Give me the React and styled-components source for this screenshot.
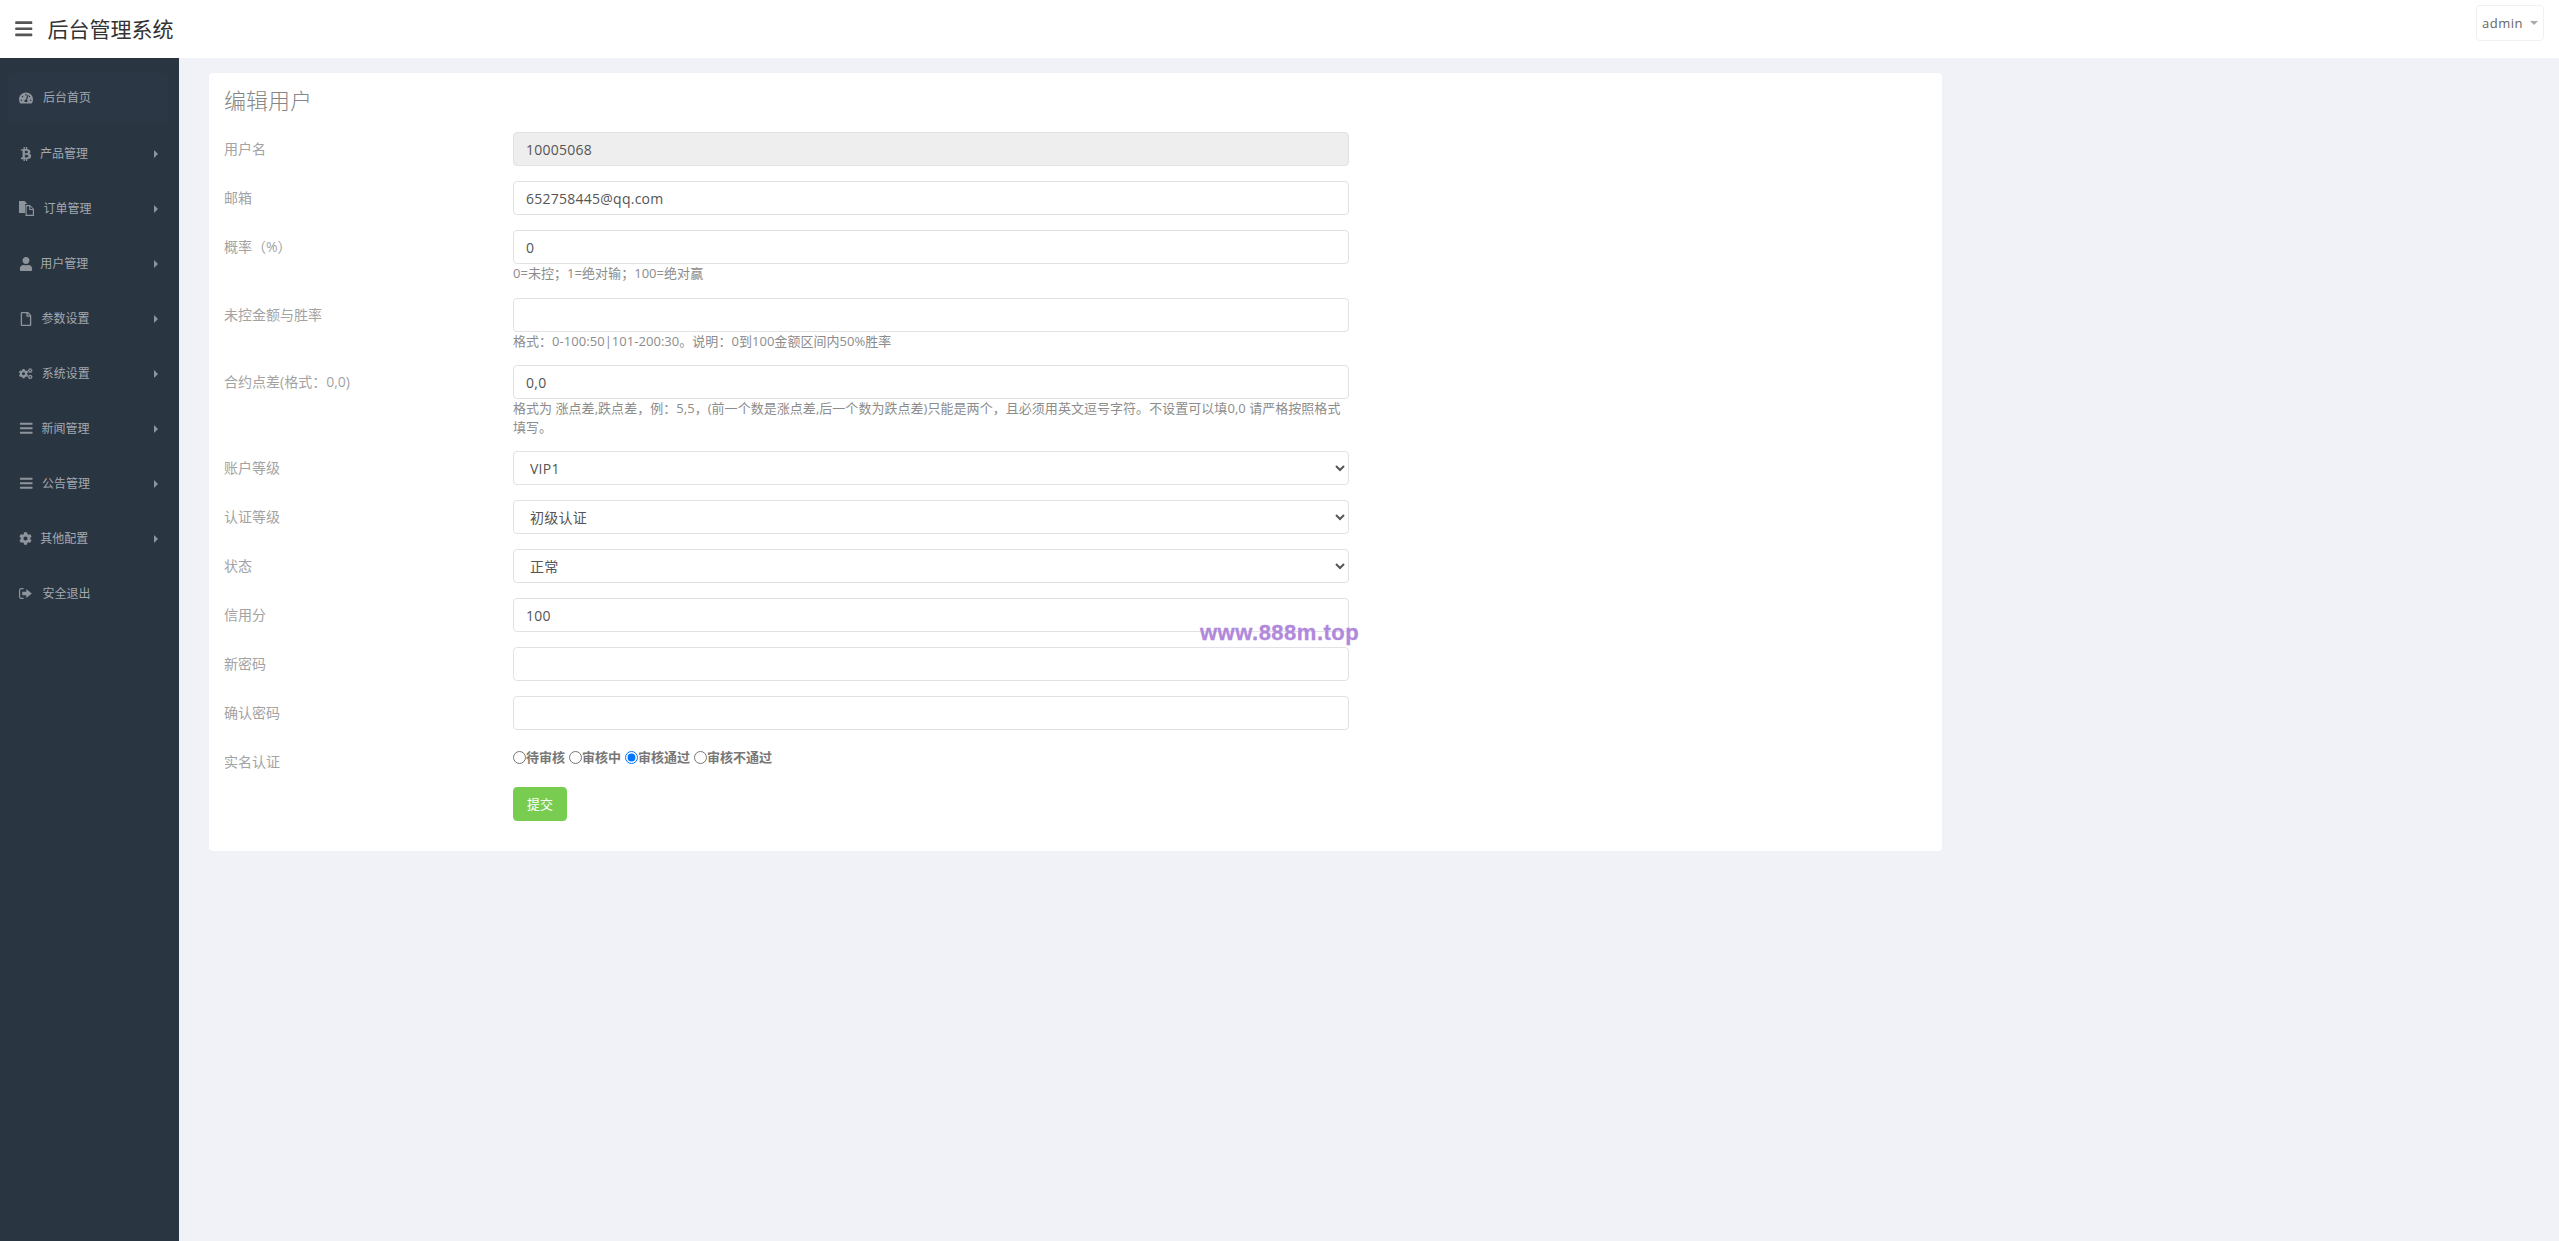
import React from 'react'
import styled, { createGlobalStyle } from 'styled-components'
import { FaBars, FaBtc, FaCog, FaCogs, FaRegFile, FaTachometerAlt, FaUser } from 'react-icons/fa'

const Global = createGlobalStyle`
  html, body { margin: 0; padding: 0; height: 100%; background: #f0f2f7; }
  body { font-family: "Open Sans", "Noto Sans CJK SC", sans-serif; font-size: 14px; line-height: 1.42857; color: #797979; overflow: hidden; }
  * { box-sizing: border-box; }
`

const Page = styled.div`
  height: 1241px;
  display: flex;
  flex-direction: column;
  position: relative;
`

const Header = styled.header`
  height: 58px;
  flex: none;
  background: #fff;
  display: flex;
  align-items: center;
  padding: 0 15px 0 14px;
`

const Burger = styled.span`
  display: flex;
  font-size: 19.5px;
  color: #555;
  margin-right: 14px;
  svg { width: auto; height: 1em; }
`

const Brand = styled.div`
  font-size: 21px;
  color: #333;
  line-height: 1;
  flex: 1;
`

const UserButton = styled.div`
  width: 68px;
  height: 36px;
  margin-top: -12px;
  border: 1px solid #f0f0f2;
  border-radius: 4px;
  display: flex;
  align-items: center;
  justify-content: center;
  gap: 7px;
  font-size: 13px;
  letter-spacing: 0.5px;
  color: #666;
`

const Caret = styled.i`
  width: 0;
  height: 0;
  border-left: 4px solid transparent;
  border-right: 4px solid transparent;
  border-top: 4px solid #aaa;
`

const Body = styled.div`
  flex: 1;
  display: flex;
  min-height: 0;
`

const Sidebar = styled.nav`
  width: 179px;
  flex: none;
  background: #2a3542;
  padding: 15px 11px 0 8px;
`

const MenuItem = styled.a`
  height: ${p => (p.$active ? '50px' : '55px')};
  margin-bottom: ${p => (p.$active ? '3px' : '0')};
  display: flex;
  align-items: center;
  padding: 0 10px 0 11px;
  font-size: 12px;
  color: #a4a9af;
  border-radius: 4px;
  background: ${p => (p.$active ? '#2c3745' : 'transparent')};
`

const MenuIcon = styled.span`
  display: flex;
  align-items: center;
  font-size: ${p => p.$size}px;
  color: #8e949b;
  margin-right: ${p => p.$gap}px;
  svg { width: auto; height: 1em; }
`

const MenuText = styled.span`
  flex: 1;
`

const Arrow = styled.i`
  width: 0;
  height: 0;
  border-top: 4px solid transparent;
  border-bottom: 4px solid transparent;
  border-left: 4px solid #8e949b;
`

const Main = styled.main`
  flex: 1;
  padding: 15px 29px 15px 30px;
`

const Card = styled.section`
  width: 1733px;
  height: 778px;
  background: #fff;
  border-radius: 4px;
  padding: 0 15px;
`

const Title = styled.h1`
  margin: 0;
  height: 59px;
  padding-top: 12px;
  font-size: 22px;
  line-height: 30px;
  font-weight: 300;
  color: #868686;
`

const Row = styled.div`
  display: flex;
  margin-bottom: 15px;
`

const Label = styled.label`
  width: 289px;
  flex: none;
  padding-top: 7px;
  color: #a3a3a3;
`

const Field = styled.div`
  width: 836px;
`

const Input = styled.input`
  display: block;
  width: 100%;
  height: 34px;
  padding: 6px 12px;
  border: 1px solid #e2e2e4;
  border-radius: 4px;
  font: inherit;
  letter-spacing: 0.25px;
  color: #555;
  background: ${p => (p.disabled ? '#eee' : '#fff')};
  outline: none;
`

const Select = styled.select`
  display: block;
  width: 100%;
  height: 34px;
  padding: 6px 12px;
  border: 1px solid #e2e2e4;
  border-radius: 4px;
  font: inherit;
  letter-spacing: 0.25px;
  color: #555;
  background: #fff;
  outline: none;
`

const Help = styled.div`
  font-size: 13px;
  letter-spacing: 0.04px;
  color: #8c8c8c;
`

const Radios = styled.div`
  height: 25px;
  margin-bottom: 2px;
  display: flex;
  align-items: center;
  gap: 4px;
`

const RadioLabel = styled.label`
  display: flex;
  align-items: center;
  font-size: 13px;
  font-weight: 700;
  color: #777;
  input { margin: 0; width: 13px; height: 13px; }
`

const Submit = styled.button`
  display: block;
  width: 54px;
  height: 34px;
  border: 1px solid #78cd51;
  border-radius: 4px;
  background: #78cd51;
  color: #fff;
  font: inherit;
  font-size: 13px;
  padding: 0;
`

const Watermark = styled.div`
  position: absolute;
  left: 1200px;
  top: 619px;
  font-family: "Liberation Sans", sans-serif;
  font-size: 22px;
  line-height: 28px;
  font-weight: 700;
  letter-spacing: 0.5px;
  color: #b088dc;
  -webkit-text-stroke: 0.3px #b088dc;
`

const FilesIcon = () => (
  <svg viewBox="0 0 15 15" fill="currentColor">
    <path d="M0 0h5.500l3 3H6v9H0z" />
    <path fillRule="evenodd" d="M6.500 4H11l4 4v7H6.500zM7.700 5.200v8.600h6.100V9h-3.600V5.200zM11.300 5.500V8h2.500z" />
  </svg>
)

const ExitIcon = () => (
  <svg viewBox="0 0 14 12" fill="currentColor">
    <path d="M5 0H2.500A2.500 2.500 0 0 0 0 2.500v7A2.500 2.500 0 0 0 2.500 12H5v-1.300H2.500a1.200 1.200 0 0 1-1.200-1.200v-7a1.200 1.200 0 0 1 1.200-1.200H5z" />
    <path d="M8 1l6 5-6 5V8H3.500V4H8z" />
  </svg>
)

const menu = [
  { text: '后台首页', icon: <FaTachometerAlt />, size: 14, gap: 10, active: true },
  { text: '产品管理', icon: <FaBtc />, size: 14, gap: 7, arrow: true },
  { text: '订单管理', icon: <FilesIcon />, size: 15, gap: 9.5, arrow: true },
  { text: '用户管理', icon: <FaUser />, size: 14, gap: 7.25, arrow: true },
  { text: '参数设置', icon: <FaRegFile />, size: 14, gap: 8.5, arrow: true },
  { text: '系统设置', icon: <FaCogs />, size: 13.5, gap: 9.2, arrow: true },
  { text: '新闻管理', icon: <FaBars />, size: 14.5, gap: 8, arrow: true },
  { text: '公告管理', icon: <FaBars />, size: 14.5, gap: 8.5, arrow: true },
  { text: '其他配置', icon: <FaCog />, size: 13, gap: 8.3, arrow: true },
  { text: '安全退出', icon: <ExitIcon />, size: 11, gap: 10.7 },
]

const TextRow = ({ label, value, help, disabled }) => (
  <Row>
    <Label>{label}</Label>
    <Field>
      <Input defaultValue={value} disabled={disabled} />
      {help && <Help>{help}</Help>}
    </Field>
  </Row>
)

const SelectRow = ({ label, value }) => (
  <Row>
    <Label>{label}</Label>
    <Field>
      <Select defaultValue={value}>
        <option>{value}</option>
      </Select>
    </Field>
  </Row>
)

export default function App() {
  return (
    <Page>
      <Global />
      <Header>
        <Burger><FaBars /></Burger>
        <Brand>后台管理系统</Brand>
        <UserButton>admin<Caret /></UserButton>
      </Header>
      <Body>
        <Sidebar>
          {menu.map(m => (
            <MenuItem key={m.text} $active={m.active}>
              <MenuIcon $size={m.size} $gap={m.gap}>{m.icon}</MenuIcon>
              <MenuText>{m.text}</MenuText>
              {m.arrow && <Arrow />}
            </MenuItem>
          ))}
        </Sidebar>
        <Main>
          <Card>
            <Title>编辑用户</Title>
            <TextRow label="用户名" value="10005068" disabled />
            <TextRow label="邮箱" value="652758445@qq.com" />
            <TextRow label="概率（%）" value="0" help="0=未控；1=绝对输；100=绝对赢" />
            <TextRow label="未控金额与胜率" value="" help="格式：0-100:50|101-200:30。说明：0到100金额区间内50%胜率" />
            <TextRow
              label="合约点差(格式：0,0)"
              value="0,0"
              help="格式为 涨点差,跌点差，例：5,5，(前一个数是涨点差,后一个数为跌点差)只能是两个，且必须用英文逗号字符。不设置可以填0,0 请严格按照格式填写。"
            />
            <SelectRow label="账户等级" value="VIP1" />
            <SelectRow label="认证等级" value="初级认证" />
            <SelectRow label="状态" value="正常" />
            <TextRow label="信用分" value="100" />
            <TextRow label="新密码" value="" />
            <TextRow label="确认密码" value="" />
            <Row>
              <Label>实名认证</Label>
              <Field>
                <Radios>
                  <RadioLabel><input type="radio" name="auth" />待审核</RadioLabel>
                  <RadioLabel><input type="radio" name="auth" />审核中</RadioLabel>
                  <RadioLabel><input type="radio" name="auth" defaultChecked />审核通过</RadioLabel>
                  <RadioLabel><input type="radio" name="auth" />审核不通过</RadioLabel>
                </Radios>
              </Field>
            </Row>
            <Row>
              <Label />
              <Field><Submit>提交</Submit></Field>
            </Row>
          </Card>
        </Main>
      </Body>
      <Watermark>www.888m.top</Watermark>
    </Page>
  )
}
